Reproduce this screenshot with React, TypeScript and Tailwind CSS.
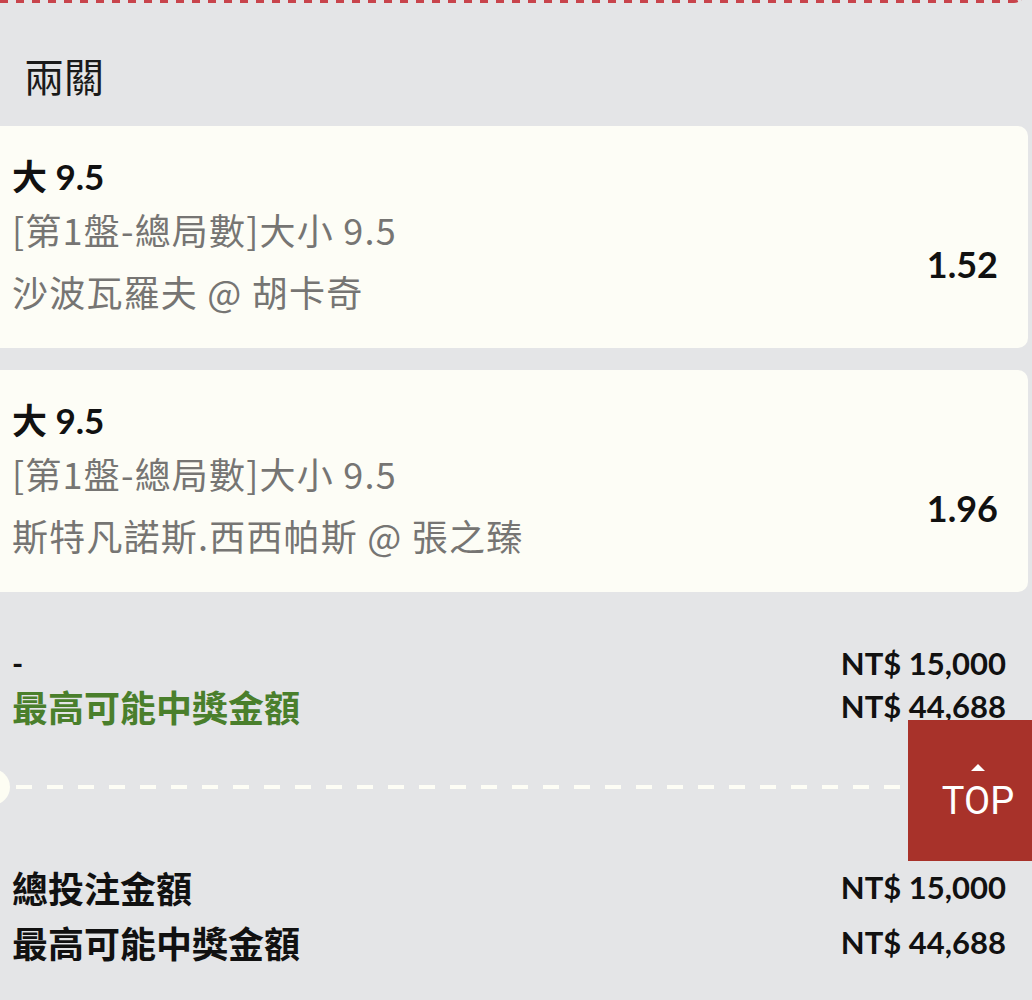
import React from "react";

function BetCard({ sub, teams, odds, className = "" }: { sub: string; teams: string; odds: string; className?: string }) {
  return (
    <div className={"-ml-[10px] w-[1038px] rounded-[10px] bg-[#fdfdf6] pt-[28px] pb-[26px] pl-[22px] pr-[30px] " + className}>
      <div className="text-[35px] leading-[44px] font-bold text-[#111]">大 9.5</div>
      <div className="flex items-center justify-between">
        <div className="text-[36px] leading-[62px] tracking-[1.2px] text-[#767573] font-['Noto_Sans_CJK_TC',sans-serif]">
          <div>{sub}</div>
          <div>{teams}</div>
        </div>
        <div className="text-[36px] font-bold text-[#111] pt-[8px]">{odds}</div>
      </div>
    </div>
  );
}

export default function App() {
  return (
    <div className="relative w-[1032px] h-[1000px] overflow-hidden bg-[#e4e5e7] font-['Lato','Noto_Sans_CJK_TC',sans-serif]">
      <div className="-mt-[20px] h-[23px] mr-[6px] flex">
        <div className="flex-1 self-end h-[3px] bg-[repeating-linear-gradient(to_right,#c8444c_0_8px,transparent_8px_16px)]" />
        <div className="w-[14px] border-b-[3px] border-r-[3px] border-dashed border-[#c8444c] rounded-br-[12px]" />
      </div>
      <div className="pt-[50px] pb-[29px] pl-[24px] text-[40px] leading-[44px] text-[#1a1a1a] font-['Noto_Sans_CJK_TC',sans-serif]">
        兩關
      </div>

      <BetCard sub="[第1盤-總局數]大小 9.5" teams="沙波瓦羅夫 @ 胡卡奇" odds="1.52" />
      <BetCard className="mt-[22px]" sub="[第1盤-總局數]大小 9.5" teams="斯特凡諾斯.西西帕斯 @ 張之臻" odds="1.96" />

      <div className="pt-[50px] pl-[12px] pr-[26px]">
        <div className="flex justify-between items-center leading-[43px]">
          <span className="text-[30px] font-bold text-[#111]">-</span>
          <span className="text-[31px] font-bold text-[#111]">NT$ 15,000</span>
        </div>
        <div className="flex justify-between items-center leading-[43px]">
          <span className="text-[36px] font-bold text-[#4a7f2c] font-['Noto_Sans_CJK_TC',sans-serif]">最高可能中獎金額</span>
          <span className="text-[31px] font-bold text-[#111]">NT$ 44,688</span>
        </div>
      </div>

      <div className="mt-[41px] h-[36px] flex items-center">
        <div className="-ml-[26px] w-[36px] h-[36px] shrink-0 rounded-full bg-[#fdfdf3]" />
        <div className="ml-[6px] flex-1 h-[4px] bg-[repeating-linear-gradient(to_right,#fdfdf5_0_16px,transparent_16px_31px)]" />
      </div>

      <div className="mt-[55px] pl-[12px] pr-[26px]">
        <div className="flex justify-between items-center leading-[55px]">
          <span className="text-[36px] font-bold text-[#111] font-['Noto_Sans_CJK_TC',sans-serif]">總投注金額</span>
          <span className="text-[31px] font-bold text-[#111]">NT$ 15,000</span>
        </div>
        <div className="flex justify-between items-center leading-[55px]">
          <span className="text-[36px] font-bold text-[#111] font-['Noto_Sans_CJK_TC',sans-serif]">最高可能中獎金額</span>
          <span className="text-[31px] font-bold text-[#111]">NT$ 44,688</span>
        </div>
      </div>

      <div className="absolute left-[908px] top-[720px] w-[140px] h-[141px] bg-[#a8322a] flex flex-col items-center">
        <div className="mt-[44px] w-0 h-0 border-l-[7px] border-r-[7px] border-b-[7px] border-l-transparent border-r-transparent border-b-white" />
        <div className="mt-[8px] text-[38px] leading-[44px] text-white font-['Roboto',sans-serif]">TOP</div>
      </div>
    </div>
  );
}
